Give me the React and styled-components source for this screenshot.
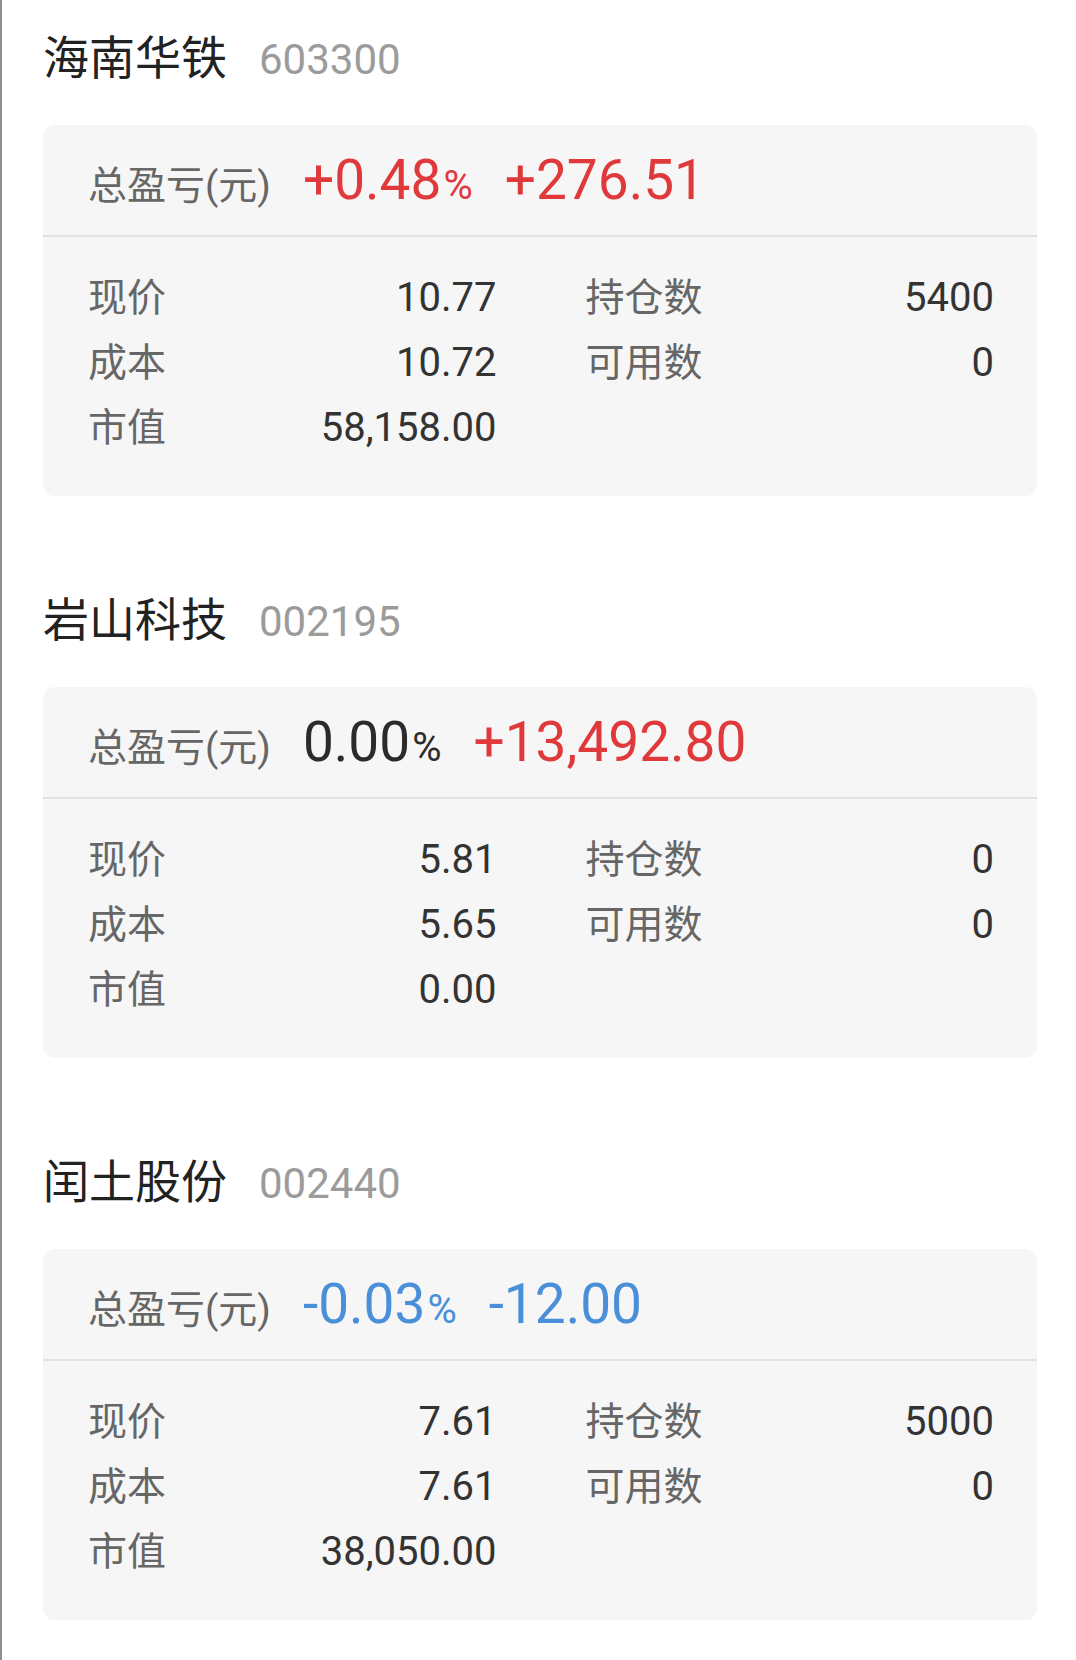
import React from 'react';
import styled, { createGlobalStyle } from 'styled-components';

const GlobalStyle = createGlobalStyle`
  html, body {
    margin: 0;
    padding: 0;
    background: #fff;
  }
  body {
    font-family: Roboto, "Noto Sans CJK SC", sans-serif;
  }
`;

const Page = styled.div`
  min-height: 1660px;
  box-sizing: border-box;
  border-left: 2px solid #8e8e8e;
  padding: 0 39px 0 41px;
`;

const Section = styled.section`
  padding-top: 28px;
  margin-bottom: 66px;
`;

const TitleRow = styled.div`
  display: flex;
  align-items: baseline;
  height: 60px;
  line-height: 60px;
  margin-bottom: 37px;
`;

const StockName = styled.span`
  font-size: 46px;
  color: #222;
  margin-right: 32px;
`;

const StockCode = styled.span`
  font-size: 42px;
  color: #9b9b9b;
`;

const Card = styled.div`
  background: #f6f6f6;
  border-radius: 12px;
  height: 371px;
  overflow: hidden;
`;

const CardHeader = styled.div`
  display: flex;
  align-items: baseline;
  gap: 32px;
  height: 112px;
  box-sizing: border-box;
  padding: 23px 45px 0;
  border-bottom: 2px solid #e1e1e1;
`;

const HeaderLabel = styled.span`
  font-size: 39px;
  color: #666;
`;

const colors = {
  up: '#e0393b',
  down: '#4a8fd9',
  flat: '#2b2b2b',
};

const Figure = styled.span`
  font-size: 55px;
  color: ${(p) => colors[p.$trend]};
`;

const Pct = styled.span`
  font-size: 40px;
  margin-left: 2px;
`;

const CardBody = styled.div`
  display: grid;
  grid-template-columns: 1fr 1fr;
  column-gap: 89px;
  padding: 28px 43px 0 45px;
`;

const Cell = styled.div`
  display: flex;
  justify-content: space-between;
  align-items: baseline;
  height: 65px;
  line-height: 65px;
`;

const Label = styled.span`
  font-size: 39px;
  color: #666;
`;

const Value = styled.span`
  font-size: 40px;
  color: #333;
`;

const trendOf = (s) => (s.startsWith('+') ? 'up' : s.startsWith('-') ? 'down' : 'flat');

const stocks = [
  {
    name: '海南华铁',
    code: '603300',
    pct: '+0.48',
    pnl: '+276.51',
    price: '10.77',
    cost: '10.72',
    value: '58,158.00',
    hold: '5400',
    avail: '0',
  },
  {
    name: '岩山科技',
    code: '002195',
    pct: '0.00',
    pnl: '+13,492.80',
    price: '5.81',
    cost: '5.65',
    value: '0.00',
    hold: '0',
    avail: '0',
  },
  {
    name: '闰土股份',
    code: '002440',
    pct: '-0.03',
    pnl: '-12.00',
    price: '7.61',
    cost: '7.61',
    value: '38,050.00',
    hold: '5000',
    avail: '0',
  },
];

const StockCard = ({ stock }) => (
  <Section>
    <TitleRow>
      <StockName>{stock.name}</StockName>
      <StockCode>{stock.code}</StockCode>
    </TitleRow>
    <Card>
      <CardHeader>
        <HeaderLabel>总盈亏(元)</HeaderLabel>
        <Figure $trend={trendOf(stock.pct)}>
          {stock.pct}
          <Pct>%</Pct>
        </Figure>
        <Figure $trend={trendOf(stock.pnl)}>{stock.pnl}</Figure>
      </CardHeader>
      <CardBody>
        <Cell>
          <Label>现价</Label>
          <Value>{stock.price}</Value>
        </Cell>
        <Cell>
          <Label>持仓数</Label>
          <Value>{stock.hold}</Value>
        </Cell>
        <Cell>
          <Label>成本</Label>
          <Value>{stock.cost}</Value>
        </Cell>
        <Cell>
          <Label>可用数</Label>
          <Value>{stock.avail}</Value>
        </Cell>
        <Cell>
          <Label>市值</Label>
          <Value>{stock.value}</Value>
        </Cell>
        <Cell />
      </CardBody>
    </Card>
  </Section>
);

export default function App() {
  return (
    <>
      <GlobalStyle />
      <Page>
        {stocks.map((s) => (
          <StockCard key={s.code} stock={s} />
        ))}
      </Page>
    </>
  );
}
